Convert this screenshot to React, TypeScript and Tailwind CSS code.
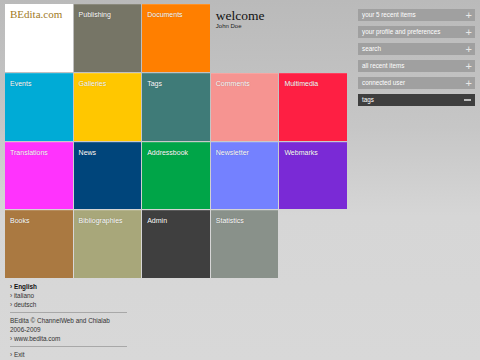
import React from "react";

const tiles: { label: string; bg: string }[] = [
  { label: "Events", bg: "bg-[#00abd6]" },
  { label: "Galleries", bg: "bg-[#ffc700]" },
  { label: "Tags", bg: "bg-[#3f7b78]" },
  { label: "Comments", bg: "bg-[#f69491]" },
  { label: "Multimedia", bg: "bg-[#fe1f43]" },
  { label: "Translations", bg: "bg-[#ff33fd]" },
  { label: "News", bg: "bg-[#00457b]" },
  { label: "Addressbook", bg: "bg-[#00a548]" },
  { label: "Newsletter", bg: "bg-[#7481ff]" },
  { label: "Webmarks", bg: "bg-[#7a2ad6]" },
  { label: "Books", bg: "bg-[#aa7941]" },
  { label: "Bibliographies", bg: "bg-[#a8a77a]" },
  { label: "Admin", bg: "bg-[#3f3f3f]" },
  { label: "Statistics", bg: "bg-[#89918a]" },
];

const side = [
  "your 5 recent items",
  "your profile and preferences",
  "search",
  "all recent items",
  "connected user",
];

function Tile({ label, bg }: { label: string; bg: string }) {
  return (
    <div className={`${bg} border-t border-white/15 pl-[5px] pt-[5px]`}>
      <div className="text-[7px] leading-[10px] text-white [text-shadow:0_0_1px_rgba(0,0,0,0.35)]">
        {label}
      </div>
    </div>
  );
}

export default function App() {
  return (
    <div
      className="w-[480px] h-[360px] overflow-hidden flex bg-[linear-gradient(to_bottom,#bababa_0%,#c6c6c6_35%,#d6d6d6_60%,#d8d8d8_100%)]"
      style={{ fontFamily: '"Liberation Sans", Arial, sans-serif' }}
    >
      <div className="w-[353px] pl-[5px] pt-[4px] flex flex-col">
        <div className="w-[342px] h-[274px] grid grid-cols-5 grid-rows-4 gap-x-px gap-y-px">
          <div className="bg-white pl-[5px] pt-[4px]">
            <div
              className="text-[11px] leading-[13px] text-[#a17a1e]"
              style={{ fontFamily: '"Liberation Serif", "Times New Roman", serif' }}
            >
              BEdita.com
            </div>
          </div>
          <Tile label="Publishing" bg="bg-[#767566]" />
          <Tile label="Documents" bg="bg-[#ff7f00]" />
          <div className="col-span-2 pl-[5px] pt-[4px]">
            <div
              className="text-[13.5px] leading-[15px] text-[#111]"
              style={{ fontFamily: '"Liberation Serif", "Times New Roman", serif' }}
            >
              welcome
            </div>
            <div className="text-[6px] leading-[7px] text-[#222]">John Doe</div>
          </div>
          {tiles.map((t) => (
            <Tile key={t.label} label={t.label} bg={t.bg} />
          ))}
        </div>
        <div className="w-[117px] ml-[5px] mt-[4px] text-[6.4px] leading-[9px] text-[#333]">
          <div className="font-bold text-[#111]">› English</div>
          <div>› italiano</div>
          <div>› deutsch</div>
          <div className="border-t border-[#a8a8a8] my-[3px]" />
          <div>BEdita © ChannelWeb and Chialab</div>
          <div>2006-2009</div>
          <div>› www.bedita.com</div>
          <div className="border-t border-[#a8a8a8] my-[3px]" />
          <div>› Exit</div>
        </div>
      </div>
      <div className="w-[117px] ml-[5px] pt-[9px] flex flex-col gap-[5px]">
        {side.map((s) => (
          <div
            key={s}
            className="h-[12px] bg-[#a0a0a0] flex items-center justify-between pl-[4px] pr-[3px] text-white text-[6.3px]"
          >
            <span>{s}</span>
            <span className="text-[11px] leading-[11px] font-light text-[#e8e8e8]">+</span>
          </div>
        ))}
        <div className="h-[12px] bg-[#3e3e3e] flex items-center justify-between pl-[4px] pr-[3px] text-white text-[6.3px]">
          <span>tags</span>
          <span className="w-[7px] h-[2px] bg-[#bdbdbd] mr-[1px]" />
        </div>
      </div>
    </div>
  );
}
